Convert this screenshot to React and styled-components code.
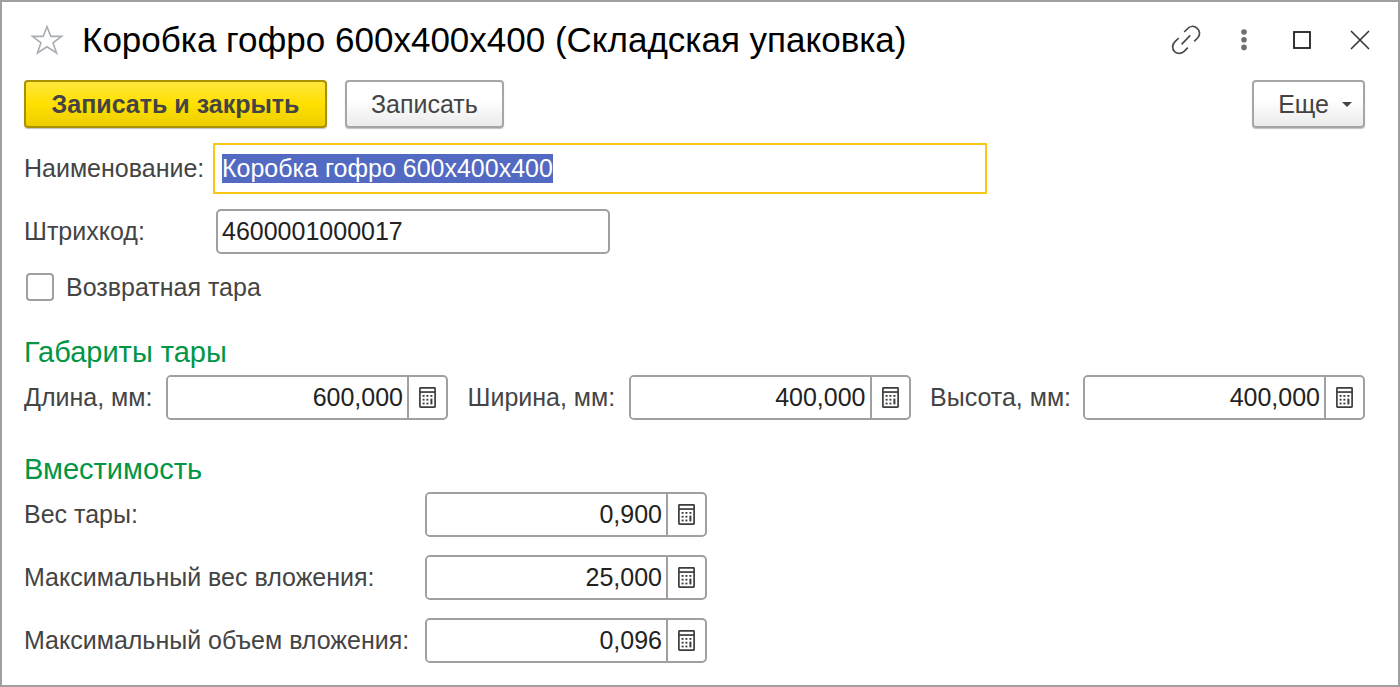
import React, { useEffect, useRef, useState } from "react";
import styled, { createGlobalStyle } from "styled-components";

function StarIcon() {
  return (
    <svg width="34" height="32" viewBox="0 0 34 32" fill="none" stroke="#a9aeb4" strokeWidth="1.6">
      <path d="M17 2.6 L20.8 12.4 L31.6 12.4 L23 18.8 L26.6 29 L17 22.8 L7.4 29 L11 18.8 L2.4 12.4 L13.2 12.4 Z" />
    </svg>
  );
}

function LinkIcon() {
  return (
    <svg width="30" height="30" viewBox="0 0 30 30" fill="none" stroke="#4a4a4a" strokeWidth="1.7">
      <path d="M13.2 7 L16.2 4 C19 1 23 0.6 26 3.2 C29.2 6 29.4 10 26.6 13 L23.2 16.4" />
      <path d="M7.8 13 L4 16.6 C1 19.6 0.8 23.8 3.6 26.6 C6.4 29.2 10.6 29 13.4 26.2 L16.8 22.6" />
      <path d="M10.6 19.4 L19.2 10.4" />
    </svg>
  );
}

function DotsIcon() {
  return (
    <svg width="6" height="22" viewBox="0 0 6 22" fill="#6e6e6e">
      <circle cx="3" cy="3" r="2.8" />
      <circle cx="3" cy="10.7" r="2.8" />
      <circle cx="3" cy="18.4" r="2.8" />
    </svg>
  );
}

function MaximizeIcon() {
  return (
    <svg width="18" height="18" viewBox="0 0 18 18" fill="none" stroke="#222" strokeWidth="1.8">
      <rect x="1" y="1" width="16" height="16" />
    </svg>
  );
}

function CloseIcon() {
  return (
    <svg width="20" height="20" viewBox="0 0 20 20" fill="none" stroke="#333" strokeWidth="1.6">
      <path d="M1 1 L19 19 M19 1 L1 19" />
    </svg>
  );
}

function CalculatorIcon() {
  return (
    <svg width="17" height="21" viewBox="0 0 17 21" fill="#3c3c3c">
      <rect x="0.9" y="0.9" width="15.2" height="19.2" rx="0.6" fill="none" stroke="#3c3c3c" strokeWidth="1.7" />
      <rect x="1" y="4.2" width="15" height="1.7" />
      <rect x="3.6" y="8" width="2" height="1.8" />
      <rect x="7.4" y="8" width="2" height="1.8" />
      <rect x="11.4" y="8" width="2" height="1.8" />
      <rect x="3.6" y="11.8" width="2" height="1.8" />
      <rect x="7.4" y="11.8" width="2" height="1.8" />
      <rect x="11.4" y="11.6" width="2" height="5.8" />
      <rect x="3.6" y="15.6" width="2" height="1.8" />
      <rect x="7.4" y="15.6" width="2" height="1.8" />
    </svg>
  );
}

function NumberField({ id, value, onChange }) {
  return (
    <NumberBox>
      <NumberInput
        id={id}
        type="text"
        inputMode="decimal"
        value={value}
        onChange={(e) => onChange(e.target.value)}
      />
      <CalculatorButton type="button" aria-label="Калькулятор">
        <CalculatorIcon />
      </CalculatorButton>
    </NumberBox>
  );
}

const sizeFields = [
  { id: "length", label: "Длина, мм:", labelWidth: "132px" },
  { id: "width", label: "Ширина, мм:", labelWidth: "151px" },
  { id: "height", label: "Высота, мм:", labelWidth: "143px" },
];

const capacityFields = [
  { id: "weight", label: "Вес тары:" },
  { id: "maxWeight", label: "Максимальный вес вложения:" },
  { id: "maxVolume", label: "Максимальный объем вложения:" },
];

function App() {
  const [name, setName] = useState("Коробка гофро 600x400x400");
  const [barcode, setBarcode] = useState("4600001000017");
  const [returnable, setReturnable] = useState(false);
  const [numbers, setNumbers] = useState({
    length: "600,000",
    width: "400,000",
    height: "400,000",
    weight: "0,900",
    maxWeight: "25,000",
    maxVolume: "0,096",
  });
  const nameRef = useRef(null);

  // the name is ready to be typed over when the form opens
  useEffect(() => {
    nameRef.current.focus();
    nameRef.current.select();
  }, []);

  const changeNumber = (id, value) => setNumbers({ ...numbers, [id]: value });

  return (
    <Window>
      <GlobalStyle />
      <Header>
        <IconButton type="button" aria-label="В избранное">
          <StarIcon />
        </IconButton>
        <Title>Коробка гофро 600x400x400 (Складская упаковка)</Title>
        <WindowButtons>
          <IconButton type="button" aria-label="Ссылка">
            <LinkIcon />
          </IconButton>
          <IconButton type="button" aria-label="Меню">
            <DotsIcon />
          </IconButton>
          <IconButton type="button" aria-label="Развернуть">
            <MaximizeIcon />
          </IconButton>
          <IconButton type="button" aria-label="Закрыть">
            <CloseIcon />
          </IconButton>
        </WindowButtons>
      </Header>
      <Content onSubmit={(e) => e.preventDefault()}>
        <Toolbar>
          <Button type="submit" $primary>
            Записать и закрыть
          </Button>
          <Button type="button">Записать</Button>
          <MoreButton type="button">
            Еще
            <Caret />
          </MoreButton>
        </Toolbar>
        <Rows>
          <Row $labelWidth="192px">
            <Label htmlFor="name">Наименование:</Label>
            <TextInput
              id="name"
              type="text"
              ref={nameRef}
              $maxWidth="768px"
              value={name}
              onChange={(e) => setName(e.target.value)}
            />
          </Row>
          <Row $labelWidth="192px">
            <Label htmlFor="barcode">Штрихкод:</Label>
            <TextInput
              id="barcode"
              type="text"
              $maxWidth="394px"
              value={barcode}
              onChange={(e) => setBarcode(e.target.value)}
            />
          </Row>
          <CheckRow>
            <Checkbox
              id="returnable"
              type="checkbox"
              checked={returnable}
              onChange={(e) => setReturnable(e.target.checked)}
            />
            <Label htmlFor="returnable">Возвратная тара</Label>
          </CheckRow>
        </Rows>
        <SectionTitle>Габариты тары</SectionTitle>
        <SizeRow>
          {sizeFields.map(({ id, label, labelWidth }) => (
            <SizeItem key={id}>
              <Label htmlFor={id} $minWidth={labelWidth}>
                {label}
              </Label>
              <NumberField id={id} value={numbers[id]} onChange={(v) => changeNumber(id, v)} />
            </SizeItem>
          ))}
        </SizeRow>
        <SectionTitle>Вместимость</SectionTitle>
        <Rows>
          {capacityFields.map(({ id, label }) => (
            <Row key={id} $labelWidth="401px">
              <Label htmlFor={id}>{label}</Label>
              <NumberField id={id} value={numbers[id]} onChange={(v) => changeNumber(id, v)} />
            </Row>
          ))}
        </Rows>
      </Content>
    </Window>
  );
}

export default App;

const GlobalStyle = createGlobalStyle`
  * {
    box-sizing: border-box;
  }
  body {
    margin: 0;
    background: #fff;
  }
  body, button, input {
    font-family: "Liberation Sans", Arial, sans-serif;
    font-size: 25px;
    color: #444;
  }
`;
const Window = styled.div`
  min-height: 100vh;
  border: 2px solid #a0a0a0;
  background: #fff;
`;
const Header = styled.header`
  display: flex;
  align-items: center;
  min-height: 76px;
  padding: 0 28px;
`;
const Title = styled.h1`
  flex: 1;
  margin: 0 0 0 18px;
  font-size: 35px;
  line-height: 40px;
  font-weight: 400;
  color: #000;
`;
const WindowButtons = styled.div`
  display: grid;
  grid-template-columns: repeat(4, 20px);
  justify-items: center;
  column-gap: 38px;
`;
const IconButton = styled.button`
  display: flex;
  align-items: center;
  justify-content: center;
  padding: 0;
  border: none;
  background: none;
`;
const Content = styled.form`
  padding: 2px 33px 22px 22px;
`;
const Toolbar = styled.div`
  display: flex;
  gap: 18px;
  margin-bottom: 18px;
`;
const Button = styled.button`
  height: 48px;
  min-width: ${(props) => (props.$primary ? "303px" : "0")};
  padding: 0 24px;
  border: 2px solid ${(props) => (props.$primary ? "#a89200" : "#a6a6a6")};
  border-radius: 4px;
  background: ${(props) =>
    props.$primary
      ? "linear-gradient(#ffe83c, #ffe000 50%, #ecce00)"
      : "linear-gradient(#fff 40%, #ebebeb)"};
  box-shadow: 0 1px 1px rgba(0, 0, 0, 0.25);
  font-weight: ${(props) => (props.$primary ? 700 : 400)};
`;
const MoreButton = styled(Button)`
  display: flex;
  align-items: center;
  gap: 13px;
  margin-left: auto;
  padding: 0 11px 0 24px;
`;
const Caret = styled.span`
  border: 5px solid transparent;
  border-top-color: #444;
  border-bottom: none;
`;
const Rows = styled.div`
  display: grid;
  gap: 18px;
`;
const Row = styled.div`
  display: grid;
  grid-template-columns: ${(props) => props.$labelWidth} 1fr;
  align-items: center;
`;
const Label = styled.label`
  min-width: ${(props) => props.$minWidth || "0"};
  line-height: 27px;
  white-space: nowrap;
`;
const TextInput = styled.input`
  width: 100%;
  max-width: ${(props) => props.$maxWidth};
  height: 45px;
  padding: 0 4px;
  border: 2px solid #a0a0a0;
  border-radius: 5px;
  color: #222;

  &:focus {
    border-color: transparent;
    border-radius: 0;
    outline: 2px solid #fac814;
    outline-offset: 1px;
  }
  &::selection {
    background: rgba(80, 104, 192, 0.99);
    color: #fff;
  }
`;
const CheckRow = styled.div`
  display: flex;
  align-items: center;
  gap: 12px;
  padding: 1px 2px 2px;
`;
const Checkbox = styled.input`
  appearance: none;
  width: 28px;
  height: 28px;
  margin: 0;
  border: 2px solid #a0a0a0;
  border-radius: 4px;
  background: #fff;

  &:checked {
    background: #444;
  }
`;
const SectionTitle = styled.h2`
  margin: 32px 0 6px;
  font-size: 29px;
  line-height: 34px;
  font-weight: 400;
  color: #009646;
`;
const SizeRow = styled.div`
  display: flex;
  flex-wrap: wrap;
  justify-content: space-between;
  gap: 18px;
`;
const SizeItem = styled.div`
  display: flex;
  align-items: center;
  gap: 10px;
`;
const NumberBox = styled.div`
  display: flex;
  width: 282px;
  height: 45px;
  border: 2px solid #a0a0a0;
  border-radius: 5px;
  overflow: hidden;
`;
const NumberInput = styled.input`
  flex: 1;
  min-width: 0;
  padding: 0 4px;
  border: none;
  outline: none;
  text-align: right;
  color: #222;
`;
const CalculatorButton = styled.button`
  display: flex;
  align-items: center;
  justify-content: center;
  width: 39px;
  padding: 0;
  border: none;
  border-left: 2px solid #a0a0a0;
  background: none;
`;
